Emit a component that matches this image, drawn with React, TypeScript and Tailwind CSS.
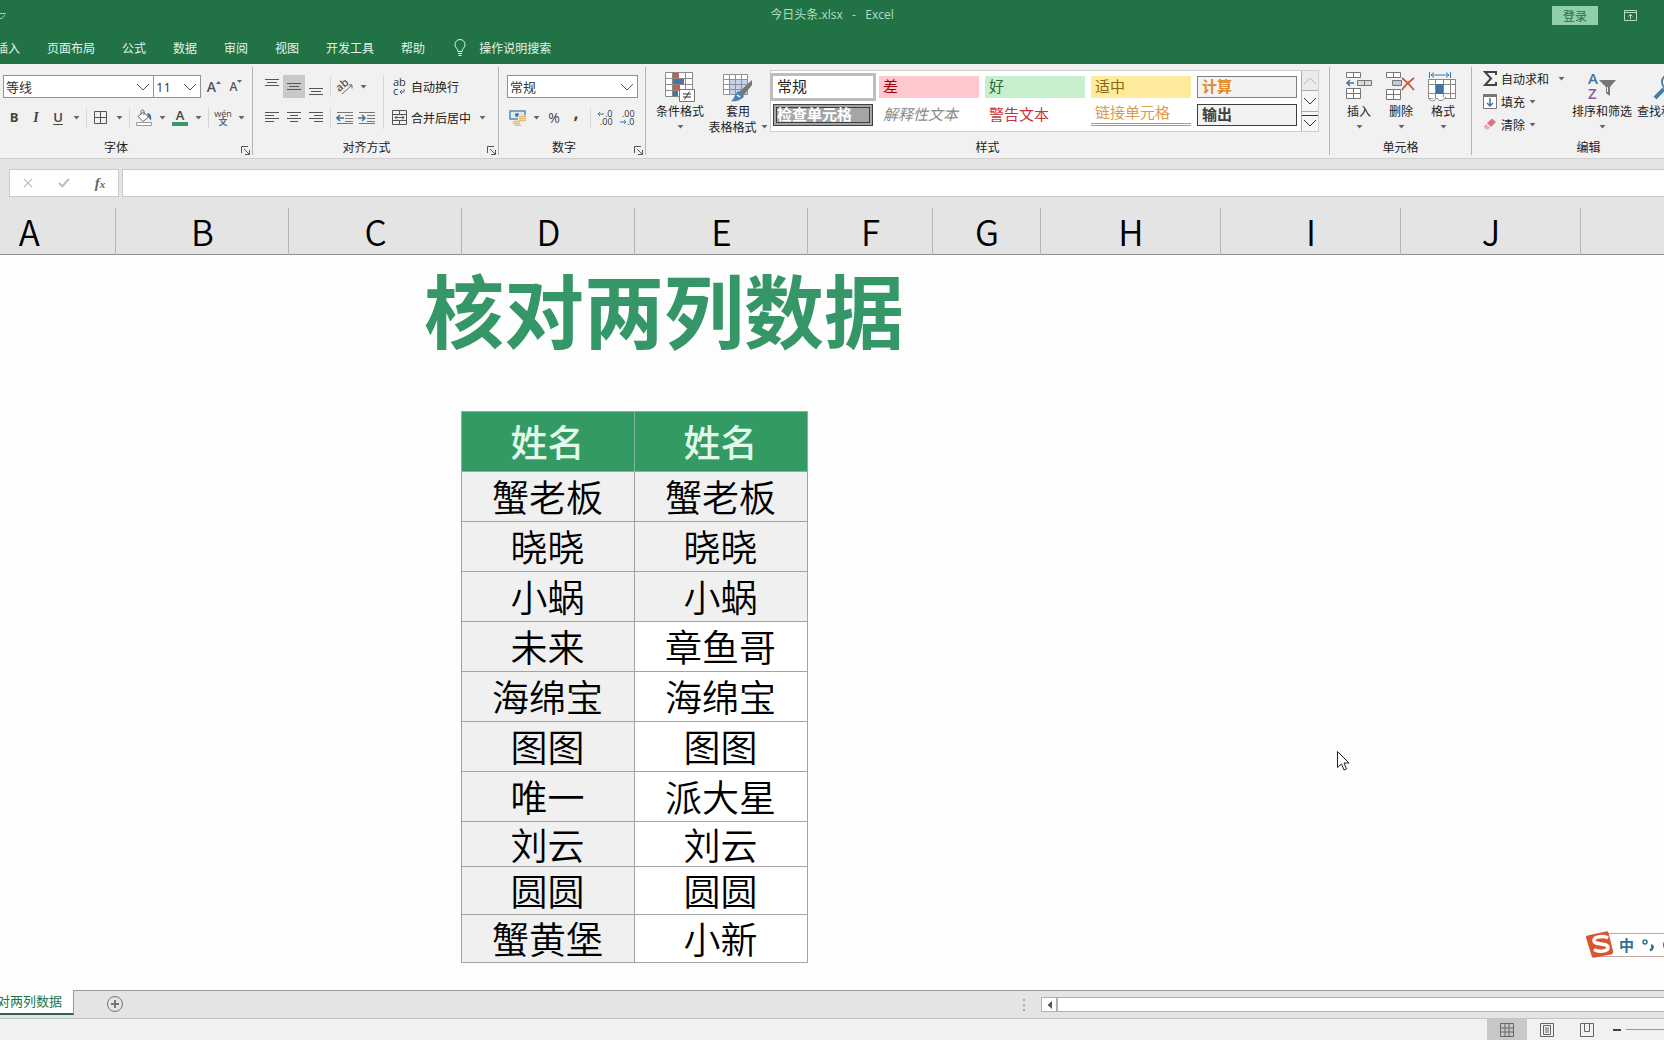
import type { ReactNode } from 'react'

interface Person {
  left: string
  right: string
  height: string
  shaded?: boolean
}

const tabs = ['插入', '页面布局', '公式', '数据', '审阅', '视图', '开发工具', '帮助']

const people: Person[] = [
  { left: '蟹老板', right: '蟹老板', height: 'h-[50px]', shaded: true },
  { left: '晓晓', right: '晓晓', height: 'h-[50px]', shaded: true },
  { left: '小蜗', right: '小蜗', height: 'h-[50px]', shaded: true },
  { left: '未来', right: '章鱼哥', height: 'h-[50px]' },
  { left: '海绵宝', right: '海绵宝', height: 'h-[50px]' },
  { left: '图图', right: '图图', height: 'h-[50px]' },
  { left: '唯一', right: '派大星', height: 'h-[50px]' },
  { left: '刘云', right: '刘云', height: 'h-[45px]' },
  { left: '圆圆', right: '圆圆', height: 'h-[48px]' },
  { left: '蟹黄堡', right: '小新', height: 'h-[48px]' },
]

const columns = [
  { name: 'A', width: 'w-[173px]' },
  { name: 'B', width: 'w-[173px]' },
  { name: 'C', width: 'w-[173px]' },
  { name: 'D', width: 'w-[173px]' },
  { name: 'E', width: 'w-[173px]' },
  { name: 'F', width: 'w-[125px]' },
  { name: 'G', width: 'w-[108px]' },
  { name: 'H', width: 'w-[180px]' },
  { name: 'I', width: 'w-[180px]' },
  { name: 'J', width: 'w-[180px]' },
  { name: '', width: '' },
]

const cellStyles = [
  { name: '常规', style: 'pl-1 bg-white text-[#222] ring-3 ring-[#bdbdbd]' },
  { name: '差', style: 'pl-1 bg-[#ffc7ce] text-[#9c0006]' },
  { name: '好', style: 'pl-1 bg-[#c6efce] text-[#2f6b2f]' },
  { name: '适中', style: 'pl-1 bg-[#ffeb9c] text-[#8a6510]' },
  { name: '计算', style: 'pl-1 bg-[#f2f2f2] font-bold text-[#e08a2c] border border-[#7f7f7f]' },
  { name: '检查单元格', style: 'bg-[#a5a5a5] font-bold text-white border-4 border-double border-[#3f3f3f]' },
  { name: '解释性文本', style: 'pl-1 italic text-[#8a8a8a]' },
  { name: '警告文本', style: 'pl-1 text-[#c8323c]' },
  { name: '链接单元格', style: 'pl-1 text-[#dd9a4a] border-b-3 border-double border-[#e0902c]' },
  { name: '输出', style: 'pl-1 bg-[#f2f2f2] font-bold text-[#3f3f3f] border border-[#3f3f3f]' },
]

function Caret() {
  return (
    <svg width="7" height="4" viewBox="0 0 7 4" aria-hidden="true">
      <path d="M0.5 0h6L3.5 3.5z" fill="#666" />
    </svg>
  )
}

function CaretButton({ label }: { label: string }) {
  return (
    <button type="button" aria-label={label} className="flex h-[22px] w-[14px] items-center justify-center">
      <Caret />
    </button>
  )
}

function Tool({ label, active, children }: { label: string; active?: boolean; children: ReactNode }) {
  return (
    <button
      type="button"
      aria-label={label}
      className={`flex h-[23px] w-[22px] shrink-0 items-center justify-center ${active ? 'bg-[#c8c8c8]' : ''}`}
    >
      {children}
    </button>
  )
}

function Divider({ tall }: { tall?: boolean }) {
  return <span className={`w-px bg-[#d6d6d6] ${tall ? 'mx-[5px] h-[54px]' : 'mx-[3px] h-5'}`} />
}

function Group({ label, width, launcher, children }: {
  label: string
  width: string
  launcher?: boolean
  children: ReactNode
}) {
  return (
    <section aria-label={label} className={`relative flex shrink-0 flex-col border-r border-[#b5b5b5] ${width}`}>
      <div className="flex h-[72px] items-start">{children}</div>
      <div className="h-4 text-center leading-4">{label}</div>
      {launcher && (
        <button type="button" aria-label={`${label}设置`} className="absolute right-[2px] bottom-0">
          <svg width="9" height="9" viewBox="0 0 9 9" fill="none" stroke="#555">
            <path d="M0.5 7V0.5H7M3 3l5 5M8.5 4v4.5H4" />
          </svg>
        </button>
      )}
    </section>
  )
}

function BigButton({ icon, label, second, width }: {
  icon: ReactNode
  label: string
  second?: string
  width: string
}) {
  return (
    <button type="button" className={`flex shrink-0 flex-col items-center pt-[5px] leading-4 whitespace-nowrap ${width}`}>
      <span className="flex h-[31px] items-start">{icon}</span>
      <span>{label}</span>
      <span className="flex h-4 items-center gap-1">
        {second}
        <Caret />
      </span>
    </button>
  )
}

function Dropdown({ label, value, width }: { label: string; value: string; width: string }) {
  return (
    <div className={`relative h-[23px] ${width}`}>
      <select
        aria-label={label}
        className="h-full w-full appearance-none border border-[#8f948f] bg-white px-[2px] font-['Open_Sans','Noto_Sans_CJK_SC',sans-serif] text-[13px] leading-5 text-[#333]"
      >
        <option>{value}</option>
      </select>
      <svg className="pointer-events-none absolute top-2 right-1" width="14" height="8" viewBox="0 0 14 8" fill="none" stroke="#555">
        <path d="M1 1l6 6 6-6" />
      </svg>
    </div>
  )
}

function Lines({ rows }: { rows: [number, number, number][] }) {
  return (
    <svg width="16" height="20" viewBox="0 0 16 20" stroke="#555" aria-hidden="true">
      {rows.map(([y, from, to]) => (
        <path key={y} d={`M${from} ${y}.5H${to}`} />
      ))}
    </svg>
  )
}

function IndentIcon({ outward }: { outward?: boolean }) {
  return (
    <svg width="18" height="14" viewBox="0 0 18 14" fill="none" aria-hidden="true">
      <path d="M1 1.5h16M9 4.5h8M9 7.5h8M9 10.5h8M1 12.5h16" stroke="#777" />
      <path d={outward ? 'M8 7H1M4 4L1 7l3 3' : 'M0 7h7M4 4l3 3-3 3'} stroke="#3f74a3" strokeWidth="1.6" />
    </svg>
  )
}

function FontGroup() {
  return (
    <Group label="字体" width="w-[253px] pr-[20px]" launcher>
      <div className="-mr-[20px] flex flex-col gap-2 pt-2 pl-[3px]">
        <div className="flex">
          <Dropdown label="字体名称" value="等线" width="w-[151px]" />
          <Dropdown label="字号" value="11" width="-ml-px w-[48px]" />
          <button type="button" aria-label="增大字号" className="ml-1 flex w-[18px] items-center justify-center font-['Open_Sans'] text-[14px] font-semibold text-[#555]">
            A
            <svg width="5" height="12" viewBox="0 0 5 12"><path d="M0 3h5L2.5 0z" fill="#4a6a94" /></svg>
          </button>
          <button type="button" aria-label="减小字号" className="ml-1 flex w-[18px] items-center justify-center font-['Open_Sans'] text-[12px] font-semibold text-[#555]">
            A
            <svg width="5" height="14" viewBox="0 0 5 14"><path d="M0 0h5L2.5 3z" fill="#4a6a94" /></svg>
          </button>
        </div>
        <div className="flex items-center font-['Open_Sans'] text-[13px] text-[#444]">
          <Tool label="加粗"><b>B</b></Tool>
          <Tool label="倾斜"><i className="font-['Liberation_Serif'] text-[14px] font-bold">I</i></Tool>
          <Tool label="下划线"><span className="font-semibold underline underline-offset-2">U</span></Tool>
          <CaretButton label="下划线选项" />
          <Divider />
          <Tool label="边框">
            <svg width="14" height="14" viewBox="0 0 14 14" fill="none" stroke="#555"><path d="M0.5 0.5h12v12h-12zM6.5 0.5v12M0.5 6.5h12" /></svg>
          </Tool>
          <CaretButton label="边框选项" />
          <Divider />
          <Tool label="填充颜色">
            <svg width="18" height="17" viewBox="0 0 18 17" fill="none">
              <path d="M3 7.5L8.5 3l5 5-5.5 4.5zM6 5.5V2.5a1.5 1.5 0 013 0V6" fill="#fff" stroke="#666" />
              <path d="M12 4c3.500 0 5 3 4 7.500-1.500-1-2-3-3-4z" fill="#3f74a3" />
              <path d="M1.5 13.500h15v3h-15z" fill="#fff" stroke="#999" />
            </svg>
          </Tool>
          <CaretButton label="填充颜色选项" />
          <Tool label="字体颜色">
            <span className="w-4 border-b-4 border-[#339966] text-center text-[13px] leading-[13px] font-semibold">A</span>
          </Tool>
          <CaretButton label="字体颜色选项" />
          <Divider />
          <Tool label="拼音指南">
            <span className="flex flex-col items-center text-[9px] leading-[8px]">
              wén
              <span className="font-['Noto_Sans_CJK_SC'] font-bold text-[#4b6a9c]">文</span>
            </span>
          </Tool>
          <CaretButton label="拼音选项" />
        </div>
      </div>
    </Group>
  )
}

function AlignGroup() {
  return (
    <Group label="对齐方式" width="w-[246px] pr-[18px]" launcher>
      <div className="-mr-[18px] flex pt-2 pl-2">
        <div className="flex flex-col gap-2">
          <div className="flex items-center">
            <Tool label="顶端对齐"><Lines rows={[[2, 1, 15], [5, 3, 13], [8, 1, 15]]} /></Tool>
            <Tool label="垂直居中" active><Lines rows={[[6, 1, 15], [9, 3, 13], [12, 1, 15]]} /></Tool>
            <Tool label="底端对齐"><Lines rows={[[11, 1, 15], [14, 3, 13], [17, 1, 15]]} /></Tool>
            <Divider />
            <Tool label="方向">
              <svg width="18" height="18" viewBox="0 0 18 18" fill="none">
                <text x="0" y="11" fontSize="11" fontFamily="Open Sans" fontWeight="600" fill="#555" transform="rotate(-40 6 8)">ab</text>
                <path d="M6 16L16 7M12.5 7H16v3.5" stroke="#666" />
              </svg>
            </Tool>
            <CaretButton label="方向选项" />
          </div>
          <div className="flex items-center">
            <Tool label="左对齐"><Lines rows={[[4, 1, 15], [7, 1, 10], [10, 1, 15], [13, 1, 10]]} /></Tool>
            <Tool label="居中"><Lines rows={[[4, 1, 15], [7, 4, 12], [10, 1, 15], [13, 4, 12]]} /></Tool>
            <Tool label="右对齐"><Lines rows={[[4, 1, 15], [7, 6, 15], [10, 1, 15], [13, 6, 15]]} /></Tool>
            <Divider />
            <Tool label="减少缩进量"><IndentIcon outward /></Tool>
            <Tool label="增加缩进量"><IndentIcon /></Tool>
          </div>
        </div>
        <Divider tall />
        <div className="flex flex-col gap-2">
          <button type="button" className="flex h-[23px] items-center whitespace-nowrap">
            <svg className="mx-[3px]" width="16" height="18" viewBox="0 0 16 18" fill="none">
              <text x="1" y="8" fontSize="11" fontFamily="Open Sans" fill="#333">ab</text>
              <text x="1" y="17" fontSize="11" fontFamily="Open Sans" fill="#333">c</text>
              <path d="M12 11v3H8M10 12l-2 2 2 2" stroke="#4b6a9c" />
            </svg>
            自动换行
          </button>
          <div className="flex items-center">
            <button type="button" className="flex h-[23px] items-center whitespace-nowrap">
              <svg className="mx-[3px]" width="16" height="16" viewBox="0 0 16 16" fill="none">
                <path d="M0.5 0.5h14v14h-14zM0.5 4.5h14M0.5 10.5h14M7.5 0.5v4M7.5 10.5v4" stroke="#555" />
                <path d="M3 7.5h9M5 5.5l-2 2 2 2M10 5.5l2 2-2 2" stroke="#555" />
              </svg>
              合并后居中
            </button>
            <span className="w-1" />
            <CaretButton label="合并选项" />
          </div>
        </div>
      </div>
    </Group>
  )
}

function NumberGroup() {
  return (
    <Group label="数字" width="w-[147px] pr-[16px]" launcher>
      <div className="-mr-[16px] flex flex-col gap-2 pt-2 pl-2">
        <Dropdown label="数字格式" value="常规" width="w-[131px]" />
        <div className="flex items-center font-['Open_Sans'] text-[#444]">
          <Tool label="会计数字格式">
            <svg width="18" height="16" viewBox="0 0 18 16" fill="none">
              <path d="M1 1h15v8H1z" fill="#dfeaf3" stroke="#5c8ab2" strokeWidth="1.500" />
              <circle cx="8" cy="5" r="2" fill="#3f74a3" />
              <path d="M9 5.500h9v8H9z" fill="#f1f1f1" />
              <path d="M10 6.5h7M10 8.5h7M10 10.5h7M4 11.5h7M4 13.5h7M6 15.500h6" stroke="#e3bd6a" strokeWidth="1.300" />
            </svg>
          </Tool>
          <CaretButton label="会计格式选项" />
          <Tool label="百分比样式"><span className="text-[14px]">%</span></Tool>
          <Tool label="千位分隔样式"><span className="pb-3 text-[18px] leading-3 font-bold">,</span></Tool>
          <Divider />
          <Tool label="增加小数位数">
            <svg width="16" height="16" viewBox="0 0 16 16" fill="none">
              <text x="8" y="7" fontSize="9" fontFamily="Open Sans" fill="#333">.0</text>
              <text x="3" y="15" fontSize="9" fontFamily="Open Sans" fill="#333">.00</text>
              <path d="M7 4H1M3 2L1 4l2 2" stroke="#3f74a3" />
            </svg>
          </Tool>
          <Tool label="减少小数位数">
            <svg width="16" height="16" viewBox="0 0 16 16" fill="none">
              <text x="3" y="7" fontSize="9" fontFamily="Open Sans" fill="#333">.00</text>
              <text x="8" y="15" fontSize="9" fontFamily="Open Sans" fill="#333">.0</text>
              <path d="M1 12h6M5 10l2 2-2 2" stroke="#3f74a3" />
            </svg>
          </Tool>
        </div>
      </div>
    </Group>
  )
}

function ConditionalIcon() {
  return (
    <svg width="30" height="30" viewBox="0 0 30 30" fill="none">
      <path d="M0.5 0.5h27v24h-27z" fill="#fff" />
      <path d="M8 1h6v5H8zM8 13h7v5H8z" fill="#c0604d" />
      <path d="M8 7h11v5H8zM8 19h5v5H8z" fill="#4a759c" />
      <path d="M0.5 0.5h27v24h-27zM0.5 6.5h27M0.5 12.5h27M0.5 18.5h27M7.5 0.5v24M20.5 0.5v24" stroke="#8a8a8a" />
      <path d="M14.5 17.5h15v12h-15z" fill="#fff" stroke="#777" />
      <path d="M18 22h8M18 25h8M24.5 19.5l-5 8" stroke="#333" />
    </svg>
  )
}

function TableFormatIcon() {
  return (
    <svg width="30" height="30" viewBox="0 0 30 30" fill="none">
      <path d="M0.5 2.5h24v20h-24z" fill="#fff" />
      <path d="M7 8h18v15H7z" fill="#c5d2ea" />
      <path d="M0.5 2.5h24v20h-24zM0.5 7.5h24M0.5 12.5h24M0.5 17.5h24M6.5 2.5v20M12.5 2.5v20M18.5 2.5v20" stroke="#8f9299" />
      <path d="M29 8v5l-9 11-4-4z" fill="#777" />
      <path d="M16 19l5 5c-2 4-8 6-13 5 4-2 3-8 8-10z" fill="#4a83b4" />
      <path d="M14 23l3 2" stroke="#fff" strokeWidth="1.500" />
    </svg>
  )
}

function StylesGroup() {
  return (
    <Group label="样式" width="w-[684px]">
      <div className="flex pl-[6px]">
        <BigButton icon={<ConditionalIcon />} label="条件格式" width="w-[56px]" />
        <BigButton icon={<TableFormatIcon />} label="套用" second="表格格式" width="w-[60px]" />
        <div className="mt-[3px] ml-[2px] flex h-[62px] border border-[#d0d0d0] bg-white">
          <div className="grid grid-cols-5 content-start gap-x-[6px] gap-y-[6px] pt-[5px] pr-1 pl-[2px]">
            {cellStyles.map((item) => (
              <button
                key={item.name}
                type="button"
                className={`flex h-[22px] w-[100px] items-center pb-[3px] text-[15px] leading-4 whitespace-nowrap ${item.style}`}
              >
                {item.name}
              </button>
            ))}
          </div>
          <div className="flex w-[17px] flex-col divide-y divide-[#ababab] border-l border-[#ababab] bg-[#f6f6f6]">
            <button type="button" aria-label="上一行" className="flex flex-1 items-center justify-center bg-[#ebebeb]">
              <svg width="14" height="8" viewBox="0 0 14 8" fill="none" stroke="#bbb"><path d="M1 7l6-6 6 6" /></svg>
            </button>
            <button type="button" aria-label="下一行" className="flex flex-1 items-center justify-center">
              <svg width="14" height="8" viewBox="0 0 14 8" fill="none" stroke="#333"><path d="M1 1l6 6 6-6" /></svg>
            </button>
            <button type="button" aria-label="其他" className="flex flex-1 items-center justify-center">
              <svg width="16" height="14" viewBox="0 0 16 14" fill="none" stroke="#333"><path d="M0 1.5h16M2 6l6 6 6-6" /></svg>
            </button>
          </div>
        </div>
      </div>
    </Group>
  )
}

function InsertCellsIcon() {
  return (
    <svg width="28" height="28" viewBox="0 0 28 28" fill="none">
      <path d="M1.5 0.5h14v5h-14zM8.5 0.5v5M1.5 16.5h14v10h-14zM8.5 16.5v10M1.5 21.5h14" fill="#fff" stroke="#777" />
      <path d="M12.5 8.5h14v5h-14zM19.5 8.5v5" fill="#d5dbe4" stroke="#777" />
      <path d="M9 11H2M5 8l-3 3 3 3" stroke="#3f74a3" strokeWidth="1.500" />
    </svg>
  )
}

function DeleteCellsIcon() {
  return (
    <svg width="30" height="28" viewBox="0 0 30 28" fill="none">
      <path d="M0.5 0.5h14v5h-14zM7.5 0.5v5M0.5 17.5h14v10h-14zM7.5 17.5v10M0.5 22.5h14" fill="#fff" stroke="#777" />
      <path d="M6.5 8.5h9v5h-9z" fill="#bccbdc" stroke="#777" />
      <path d="M16 6c4 3 8 7 12 12M28 6c-4 3-9 7-12 12" stroke="#c8583a" strokeWidth="1.700" />
    </svg>
  )
}

function FormatCellsIcon() {
  return (
    <svg width="30" height="30" viewBox="0 0 30 30" fill="none">
      <path d="M1.5 0v6M22.5 0v6M3 3h18M6 0.5L3 3l3 2.5M18 0.5L21 3l-3 2.5" stroke="#3f74a3" />
      <path d="M0.5 7.5h27v19h-27z" fill="#fff" />
      <path d="M0.5 7.5h27v19h-27zM0.5 12.5h27M0.5 21.5h27M7.5 7.5v19M15.5 7.5v19M22.5 7.5v19" stroke="#888" />
      <path d="M8 12h7v10H8z" fill="#3f74a3" />
      <path d="M1 27c3 3 6 2 8-1 2 4 6 3 9-1" fill="#fff" stroke="#888" />
    </svg>
  )
}

function SortIcon() {
  return (
    <svg width="30" height="28" viewBox="0 0 30 28" fill="none">
      <text x="1" y="12" fontSize="15" fontFamily="Open Sans" fontWeight="600" fill="#41759f">A</text>
      <text x="1" y="27" fontSize="15" fontFamily="Open Sans" fontWeight="600" fill="#8f5aa8">Z</text>
      <path d="M12 8h17l-6 7v9l-4-3v-6z" fill="#777" />
      <path d="M20.5 15v5" stroke="#f1f1f1" />
    </svg>
  )
}

function FindIcon() {
  return (
    <svg width="28" height="28" viewBox="0 0 28 28" fill="none" stroke="#4a7ba8">
      <circle cx="17" cy="10" r="8" strokeWidth="2" fill="#fff" />
      <path d="M11 17L2 26" strokeWidth="4" />
    </svg>
  )
}

function EditRow({ icon, label, spaced }: { icon: ReactNode; label: string; spaced?: boolean }) {
  return (
    <button type="button" className="flex h-[23px] items-center">
      <span className="flex w-5 items-center pl-[2px]">{icon}</span>
      {label}
      <span className={spaced ? 'ml-[9px]' : 'ml-1'}><Caret /></span>
    </button>
  )
}

function Ribbon() {
  return (
    <div className="flex overflow-hidden border-b border-[#cfcfcf] bg-[#f1f1f1] py-[3px] text-[12px] text-[#222]">
      <FontGroup />
      <AlignGroup />
      <NumberGroup />
      <StylesGroup />
      <Group label="单元格" width="w-[142px]">
        <div className="flex pl-2">
          <BigButton icon={<InsertCellsIcon />} label="插入" width="w-[42px]" />
          <BigButton icon={<DeleteCellsIcon />} label="删除" width="w-[42px]" />
          <BigButton icon={<FormatCellsIcon />} label="格式" width="w-[42px]" />
        </div>
      </Group>
      <Group label="编辑" width="w-[234px]">
        <div className="flex pl-[9px]">
          <div className="flex w-[88px] flex-col items-start">
            <EditRow
              spaced
              label="自动求和"
              icon={<svg width="14" height="15" viewBox="0 0 14 15" fill="none" stroke="#444" strokeWidth="2"><path d="M13 4V1H2l6 6.5L2 14h11v-3" /></svg>}
            />
            <EditRow
              label="填充"
              icon={
                <svg width="14" height="15" viewBox="0 0 14 15" fill="none">
                  <path d="M0.5 0.5h13v14h-13z" fill="#fff" stroke="#777" />
                  <path d="M0 0h14v3H0z" fill="#777" />
                  <path d="M7 4v8M4 9l3 3 3-3" stroke="#3f74a3" strokeWidth="1.500" />
                </svg>
              }
            />
            <EditRow
              label="清除"
              icon={
                <svg width="14" height="13" viewBox="0 0 14 13">
                  <path d="M4 5l5-4.5 4 3.5-5 5z" fill="#d9748d" />
                  <path d="M3 6l4 4-2 1.5H3L0.5 9z" fill="#e9a9b8" />
                </svg>
              }
            />
          </div>
          <BigButton icon={<SortIcon />} label="排序和筛选" width="w-[66px]" />
          <BigButton icon={<FindIcon />} label="查找和选择" width="w-[64px]" />
        </div>
      </Group>
    </div>
  )
}

function Header() {
  return (
    <header className="bg-[#217346] text-[12px] text-[#e3f5e9]">
      <div className="relative flex h-[30px] items-center justify-center text-[#b5dcc4]">
        <svg className="absolute top-3 left-0" width="6" height="8" viewBox="0 0 6 8" fill="none" stroke="#9fd0b2">
          <path d="M0 1.5h6M0 6l1 1 4-4" />
        </svg>
        <h1 className="font-['Open_Sans','Noto_Sans_CJK_SC',sans-serif] whitespace-pre">今日头条.xlsx   -   Excel</h1>
        <div className="absolute top-[6px] right-[27px] flex items-center gap-[26px]">
          <button type="button" className="h-[19px] w-[46px] bg-[#8fcfa9] leading-[19px] text-[#2b6b48]">登录</button>
          <button type="button" aria-label="功能区显示选项">
            <svg width="13" height="11" viewBox="0 0 13 11" fill="none" stroke="#b5dcc4">
              <path d="M0.5 0.5h12v10h-12zM0.5 2.5h12M6.5 9V4.5M4.5 6.5l2-2 2 2" />
            </svg>
          </button>
        </div>
      </div>
      <nav className="-ml-1 flex h-[34px] items-center gap-[27px] pt-[2px] whitespace-nowrap">
        {tabs.map((tab) => (
          <button key={tab} type="button">{tab}</button>
        ))}
        <button type="button" className="flex items-center gap-3">
          <svg className="ml-[2px]" width="13" height="18" viewBox="0 0 13 18" fill="none" stroke="#e3f5e9">
            <path d="M4 12.5c0-3-3-3.500-3-7a5 5 0 0110 0c0 3.500-3 4-3 7zM4 14.5h4M4.5 16.5h3" />
          </svg>
          操作说明搜索
        </button>
      </nav>
    </header>
  )
}

function FormulaBar() {
  return (
    <div className="flex h-[49px] bg-[#e4e4e4] pt-[10px] pb-[11px] pl-[9px]">
      <div className="flex w-[110px] border border-[#c9c9c9] bg-white">
        <button type="button" aria-label="取消" className="flex w-9 items-center justify-center">
          <svg width="10" height="10" viewBox="0 0 12 12" stroke="#bbb" strokeWidth="1.500"><path d="M1 1l10 10M11 1L1 11" /></svg>
        </button>
        <button type="button" aria-label="输入" className="flex w-9 items-center justify-center">
          <svg width="12" height="10" viewBox="0 0 14 12" fill="none" stroke="#bbb" strokeWidth="2.500"><path d="M1 6l4 4 8-9" /></svg>
        </button>
        <button type="button" aria-label="插入函数" className="w-9 font-['Liberation_Serif'] text-[15px] font-bold text-[#666] italic">
          f<span className="text-[11px]">x</span>
        </button>
      </div>
      <input aria-label="编辑栏" className="ml-[3px] min-w-0 flex-1 border border-r-0 border-[#c9c9c9] bg-white px-2 text-[13px]" />
    </div>
  )
}

function Sheet() {
  const nameCell = 'border border-[#a3a3a3] p-0 text-center text-[37px] leading-10 font-[350] text-black'

  return (
    <main className="flex-1 overflow-hidden bg-[#fdfdfd]">
      {/* Column A is partly scrolled out of view */}
      <table className="-ml-[58px] w-[calc(100%+58px)] table-fixed border-collapse">
        <thead>
          <tr className="h-[46px] border-b border-[#8f8f8f] bg-[#e4e4e4]">
            {columns.map((column) => (
              <th
                key={column.name}
                scope="col"
                className={`border-r border-[#b3b3b3] p-0 pl-[2px] text-[35px] leading-10 font-[350] text-black last:border-r-0 ${column.width}`}
              >
                {column.name}
              </th>
            ))}
          </tr>
        </thead>
        <tbody>
          <tr className="h-[116px]">
            <td colSpan={2} />
            <td colSpan={5} className="p-0 pb-[10px] text-center text-[80px] leading-[100px] font-bold whitespace-nowrap text-[#359767]">
              核对两列数据
            </td>
          </tr>
          <tr className="h-[41px]" />
          <tr className="h-[60px] bg-transparent">
            <td colSpan={3} />
            {['左', '右'].map((side) => (
              <td
                key={side}
                className="border border-[#7fb89b] bg-[#339a63] p-0 text-center text-[37px] leading-10 font-medium text-[#e2f8e8]"
              >
                姓名
              </td>
            ))}
          </tr>
          {people.map((person) => (
            <tr key={person.left} className={person.height}>
              <td colSpan={3} />
              <td className={`bg-[#f0f0f0] ${nameCell}`}>{person.left}</td>
              <td className={`${person.shaded ? 'bg-[#f0f0f0]' : 'bg-white'} ${nameCell}`}>{person.right}</td>
            </tr>
          ))}
        </tbody>
      </table>
    </main>
  )
}

function SheetTabs() {
  return (
    <div className="flex h-[28px] items-start border-t border-[#999] bg-[#e4e4e4]">
      <button
        type="button"
        className="-mt-px -ml-4 h-[25px] w-[90px] border-r border-b-2 border-r-[#999] border-b-[#2f6650] bg-white pr-[11px] pb-[2px] text-right text-[13px] leading-5 whitespace-nowrap text-[#217346]"
      >
        核对两列数据
      </button>
      <button type="button" aria-label="新工作表" className="mt-1 ml-8">
        <svg width="18" height="18" viewBox="0 0 18 18" fill="none" stroke="#777">
          <circle cx="9" cy="9" r="7.500" />
          <path d="M9 5v8M5 9h8" strokeWidth="2" />
        </svg>
      </button>
      <div className="mt-[6px] ml-auto flex w-[641px] items-center">
        <svg className="mr-[15px] shrink-0" width="3" height="12" viewBox="0 0 3 12" fill="#aaa">
          <path d="M0 0h2v2H0zM0 5h2v2H0zM0 10h2v2H0z" />
        </svg>
        <button type="button" aria-label="向左滚动" className="flex h-[15px] w-4 shrink-0 items-center justify-center border border-[#b0b0b0] bg-white">
          <svg width="5" height="8" viewBox="0 0 5 8"><path d="M5 0v8L0.5 4z" fill="#555" /></svg>
        </button>
        <div className="h-[15px] flex-1 border-y border-l border-[#b0b0b0] bg-white" />
      </div>
    </div>
  )
}

function StatusBar() {
  const view = 'flex h-full w-10 items-center justify-center'

  return (
    <footer className="flex h-[22px] items-center justify-end border-t border-[#c4c4c4] bg-[#f1f1f1]">
      <button type="button" aria-label="普通" className={`${view} bg-[#c8c8c8]`}>
        <svg width="14" height="14" viewBox="0 0 14 14" fill="none" stroke="#666">
          <path d="M0.5 0.5h13v13h-13zM0.5 5h13M0.5 9h13M5 0.5v13M9 0.5v13" />
        </svg>
      </button>
      <button type="button" aria-label="页面布局视图" className={view}>
        <svg width="14" height="14" viewBox="0 0 14 14" fill="none" stroke="#666">
          <path d="M0.5 0.5h13v13h-13zM3.5 2.5h7v9h-7zM5 5h4M5 7h4M5 9h4" />
        </svg>
      </button>
      <button type="button" aria-label="分页预览" className={view}>
        <svg width="14" height="14" viewBox="0 0 14 14" fill="none" stroke="#666">
          <path d="M0.5 0.5h13v13h-13zM4.5 0.5v8M9.5 0.5v8M4.5 8.5h5" />
        </svg>
      </button>
      <button type="button" aria-label="缩小" className="ml-[6px] flex w-2">
        <span className="h-[2px] w-2 bg-[#444]" />
      </button>
      <span className="ml-[5px] h-px w-[38px] bg-[#999]" />
    </footer>
  )
}

function InputMethodBar() {
  return (
    <div className="absolute right-0 bottom-[82px] flex h-[27px] w-[78px] items-center overflow-hidden">
      <div className="ml-3 flex h-6 flex-1 items-center border-y border-[#c4a9a3] bg-white pl-[21px] text-[15px] leading-5 font-bold whitespace-nowrap text-[#2f7096]">
        中
        <svg className="ml-2 shrink-0" width="26" height="14" viewBox="0 0 26 14" fill="none" stroke="#2f7096">
          <circle cx="3" cy="4" r="2" strokeWidth="1.500" />
          <path d="M9 7.500c2.500 0 2 3.500-1 5" strokeWidth="2.500" />
          <circle cx="27" cy="7" r="5" strokeWidth="2" />
        </svg>
      </div>
      <svg className="absolute top-0 left-0" width="28" height="27" viewBox="0 0 28 27" fill="none">
        <path d="M0 6.500c0-1 .5-1.500 1.500-2L20 .5c1.500-.5 2 0 2.500 1.500L27 20c.5 2-.5 3-2 3.500L9 26.500c-2 .5-3 0-3.500-2z" fill="#d9552f" />
        <path d="M22 7c-4-2.500-14-1.500-14 2.500 0 5 14 2 14 7 0 4-9 5-14 2" stroke="#fff" strokeWidth="3.500" />
      </svg>
    </div>
  )
}

export default function App() {
  return (
    <div className="relative flex min-h-screen flex-col overflow-hidden font-['Noto_Sans_CJK_SC',sans-serif]">
      <Header />
      <Ribbon />
      <FormulaBar />
      <Sheet />
      <SheetTabs />
      <StatusBar />
      <InputMethodBar />
      {/* Mouse pointer */}
      <svg className="pointer-events-none absolute top-[751px] left-[1337px]" width="13" height="20" viewBox="0 0 13 20" fill="#fff" stroke="#222">
        <path d="M0.5 0.5v16l4-3.5 2.5 6 2.5-1-2.5-6h5z" />
      </svg>
    </div>
  )
}
